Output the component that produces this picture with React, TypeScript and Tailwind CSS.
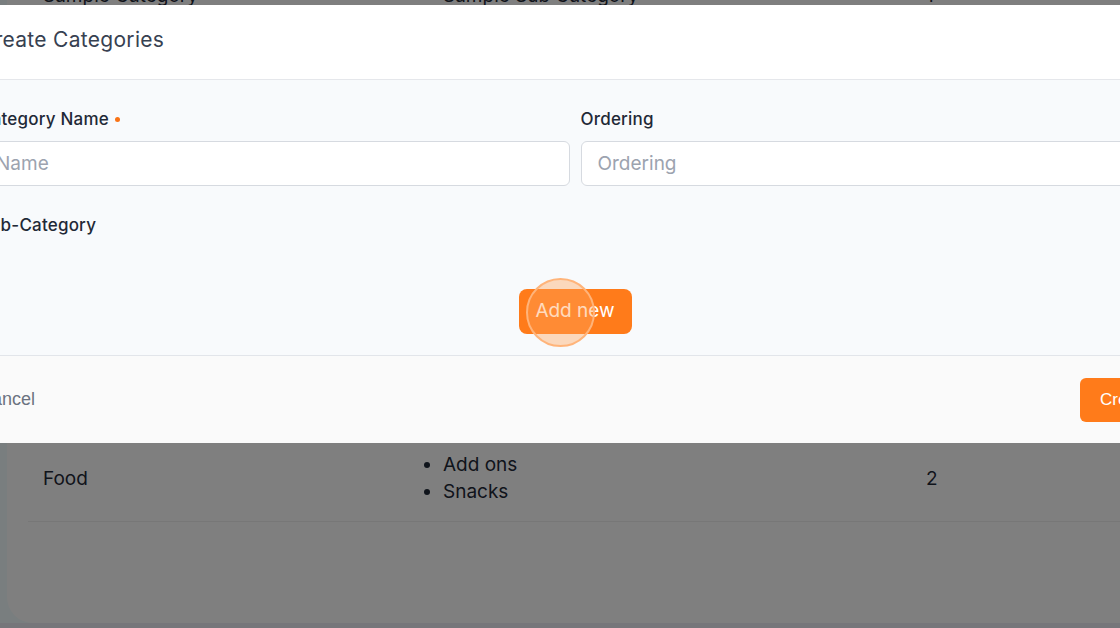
import React from 'react';

const FONT = "font-['Inter','Open_Sans',sans-serif]";

const ROWS = [
  { name: 'Sample Category', subs: ['Sample Sub Category'], order: 1 },
  { name: 'Beverages', subs: ['Coffee', 'Tea', 'Juices'], order: 3 },
  { name: 'Desserts', subs: ['Cakes', 'Ice cream'], order: 4 },
  { name: 'Bakery', subs: ['Bread', 'Pastries', 'Cookies'], order: 5 },
  { name: 'Drinks', subs: ['Soda', 'Water'], order: 6 },
];

function CategoryRow({
  name,
  subs,
  order,
  first,
}: {
  name: string;
  subs: string[];
  order: number;
  first?: boolean;
}) {
  return (
    <div
      className={`grid grid-cols-[400px_483px_1fr] items-center border-b border-[#eeeeee] pl-[15px] ${
        first ? 'pt-4 pb-[23px]' : 'py-4'
      }`}
    >
      <div className="text-[19px] leading-[27px] text-[#1f2937]">{name}</div>
      <ul className="list-disc pl-0 text-[19px] leading-[27px] text-[#1f2937]">
        {subs.map((s) => (
          <li key={s}>{s}</li>
        ))}
      </ul>
      <div className="text-[19px] leading-[27px] text-[#1f2937]">{order}</div>
    </div>
  );
}

export default function App() {
  return (
    <div className={`relative h-[628px] w-[1120px] overflow-hidden bg-[#f2fcff] ${FONT}`}>
      {/* page behind the dialog */}
      <div className="flex h-full flex-col">
        <div className="-mr-10 ml-[7px] -mt-[34px] h-[657px] rounded-bl-[26px] bg-white px-[21px]">
          {ROWS.map((r, i) => (
            <CategoryRow key={r.name} {...r} first={i === 0} />
          ))}
          <CategoryRow name="Food" subs={['Add ons', 'Snacks']} order={2} />
        </div>
        <div className="flex-1 bg-[#ececf4]" />
      </div>

      {/* overlay */}
      <div className="absolute inset-0 bg-black/50" />

      {/* dialog */}
      <div className="absolute left-[-45px] top-[5px] w-[1240px] bg-white">
        <div className="flex h-[75px] items-center border-b border-[#e5e7eb] px-6 pb-1">
          <h2 className="text-[21px] font-normal tracking-[0.3px] text-[#374151]">Create Categories</h2>
        </div>

        <div className="bg-[#f8fafc] px-6 pt-[26px] pb-[21px]">
          <div className="grid grid-cols-2 gap-x-[11px]">
            <div>
              <label className="mb-[11px] flex h-6 items-center pt-[3px] text-[17px] font-medium tracking-[0.2px] text-[#1f2937]">
                Category Name
                <span className="ml-1.5 h-[5px] w-[5px] rounded-full bg-[#f97316]" />
              </label>
              <input
                placeholder="Name"
                className="h-[45px] w-full rounded-md border border-[#d6dae0] bg-white px-4 text-[19px] text-[#374151] outline-none placeholder:text-[#9ca3af]"
              />
            </div>
            <div>
              <label className="mb-[11px] flex h-6 items-center pt-[3px] text-[17px] font-medium tracking-[0.2px] text-[#1f2937]">
                Ordering
              </label>
              <input
                placeholder="Ordering"
                className="h-[45px] w-full rounded-md border border-[#d6dae0] bg-white px-4 text-[19px] text-[#374151] outline-none placeholder:text-[#9ca3af]"
              />
            </div>
          </div>

          <div className="mt-[26px] flex h-6 items-center pt-[3px] text-[17px] font-medium tracking-[0.2px] text-[#1f2937]">
            Sub-Category
          </div>

          <div className="mt-[53px] flex justify-center">
            <button className="relative h-[45px] w-[113px] rounded-lg bg-[#ff7b1a] text-[19px] text-white">
              Add new
              {/* click ripple */}
              <span className="absolute left-[7px] top-[-11px] h-[69px] w-[69px] rounded-full border-2 border-[#ffb47a] bg-[#ffa45c]/40" />
            </button>
          </div>
        </div>

        <div className="flex h-[88px] items-center justify-between border-t border-[#e2e5ea] bg-[#fafafa] px-6 font-['Liberation_Sans',Arial,sans-serif]">
          <button className="text-[18px] text-[#6b7280]">Cancel</button>
          <button className="h-[44px] rounded-md bg-[#ff7b1a] px-5 text-[17px] text-white">
            Create
          </button>
        </div>
      </div>
    </div>
  );
}
